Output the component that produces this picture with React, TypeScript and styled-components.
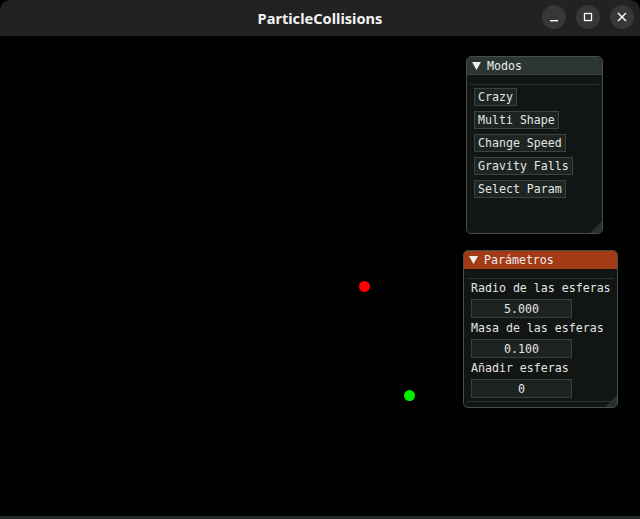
import React from "react";
import styled, { createGlobalStyle } from "styled-components";

const Global = createGlobalStyle`
  html, body { margin: 0; padding: 0; background: #000; }
  #root { width: 640px; height: 519px; }
`;

const Frame = styled.div`
  width: 640px;
  height: 519px;
  display: flex;
  flex-direction: column;
  background: #000;
  overflow: hidden;
  border-radius: 10px 10px 0 0;
`;

const TitleBar = styled.header`
  height: 36px;
  flex: none;
  background: #222222;
  display: flex;
  align-items: center;
  justify-content: center;
  position: relative;
`;

const Title = styled.div`
  font-family: "Noto Sans", "Open Sans", sans-serif;
  font-weight: 700;
  font-size: 14.6px;
  letter-spacing: 0;
  color: #f2f2f2;
`;

const Controls = styled.div`
  position: absolute;
  right: 6px;
  top: 5px;
  display: flex;
  gap: 10px;
`;

const CtlBtn = styled.div`
  width: 24px;
  height: 24px;
  border-radius: 50%;
  background: #373737;
  display: flex;
  align-items: center;
  justify-content: center;
`;

const Canvas = styled.main`
  flex: 1;
  position: relative;
  background: #000;
  border-bottom: 3px solid #23282b;
`;

const Dot = styled.div<{ $c: string }>`
  position: absolute;
  width: 11px;
  height: 11px;
  border-radius: 50%;
  background: ${(p) => p.$c};
`;

const Win = styled.section<{ $w: number; $h: number }>`
  position: absolute;
  width: ${(p) => p.$w}px;
  height: ${(p) => p.$h}px;
  box-sizing: border-box;
  background: #111513;
  border: 1px solid #464d4a;
  border-radius: 5px;
  overflow: hidden;
  display: flex;
  flex-direction: column;
  font-family: "DejaVu Sans Mono", "Liberation Mono", monospace;
  font-size: 11.6px;
  color: #e4e4e4;
`;

const WinTitle = styled.div<{ $active?: boolean }>`
  height: 17px;
  flex: none;
  background: ${(p) => (p.$active ? "#a33a16" : "#2b3531")};
  display: flex;
  align-items: center;
  gap: 6px;
  padding-left: 5px;
  color: #eeeeee;
  border-bottom: 1px solid ${(p) => (p.$active ? "#a33a16" : "#3a4541")};
`;

const Body = styled.div`
  flex: 1;
  display: flex;
  flex-direction: column;
  padding: 9px 3px 0 3px;
  position: relative;
`;

const Sep = styled.div`
  height: 1px;
  background: #2c3431;
  flex: none;
`;

const Spacer = styled.div<{ $h: number }>`
  height: ${(p) => p.$h}px;
  flex: none;
`;

const Items = styled.div<{ $gap: number; $top: number }>`
  display: flex;
  flex-direction: column;
  align-items: flex-start;
  gap: ${(p) => p.$gap}px;
  padding: ${(p) => p.$top}px 4px 0 4px;
`;

const Button = styled.div`
  height: 18px;
  box-sizing: border-box;
  padding: 0 3px;
  border: 1px solid #3a4340;
  background: #1d2421;
  display: flex;
  align-items: center;
  white-space: pre;
`;

const Label = styled.div`
  height: 13px;
  line-height: 13px;
  white-space: pre;
`;

const Input = styled.div`
  width: 101px;
  height: 19px;
  box-sizing: border-box;
  border: 1px solid #3a403e;
  background: #1e2321;
  display: flex;
  align-items: center;
  justify-content: center;
`;

const Grip = styled.div`
  position: absolute;
  right: 0;
  bottom: 0;
  width: 0;
  height: 0;
  border-left: 12px solid transparent;
  border-bottom: 12px solid #2b302e;
`;

const Arrow = () => (
  <svg width="9" height="8" viewBox="0 0 9 8">
    <polygon points="0,0 9,0 4.5,8" fill="#eeeeee" />
  </svg>
);

const App: React.FC = () => {
  const modos = ["Crazy", "Multi Shape", "Change Speed", "Gravity Falls", "Select Param"];
  const params: [string, string][] = [
    ["Radio de las esferas", "5.000"],
    ["Masa de las esferas", "0.100"],
    ["Añadir esferas", "0"],
  ];
  return (
    <>
      <Global />
      <Frame>
        <TitleBar>
          <Title>ParticleCollisions</Title>
          <Controls>
            <CtlBtn>
              <svg width="10" height="10" viewBox="0 0 10 10">
                <rect x="1" y="8" width="8" height="1.4" fill="#fff" />
              </svg>
            </CtlBtn>
            <CtlBtn>
              <svg width="10" height="10" viewBox="0 0 10 10">
                <rect x="1.5" y="1.5" width="7" height="7" fill="none" stroke="#fff" strokeWidth="1.3" />
              </svg>
            </CtlBtn>
            <CtlBtn>
              <svg width="10" height="10" viewBox="0 0 10 10">
                <path d="M1 1 L9 9 M9 1 L1 9" stroke="#fff" strokeWidth="1.4" />
              </svg>
            </CtlBtn>
          </Controls>
        </TitleBar>
        <Canvas>
          <Dot $c="#ff0000" style={{ left: 359, top: 245 }} />
          <Dot $c="#00ee00" style={{ left: 404, top: 354 }} />

          <Win $w={137} $h={178} style={{ left: 466, top: 20 }}>
            <WinTitle>
              <Arrow />
              <span>Modos</span>
            </WinTitle>
            <Body>
              <Sep />
              <Items $gap={5} $top={3}>
                {modos.map((m) => (
                  <Button key={m}>{m}</Button>
                ))}
              </Items>
              <Grip />
            </Body>
          </Win>

          <Win $w={155} $h={158} style={{ left: 463, top: 214 }}>
            <WinTitle $active>
              <Arrow />
              <span>Parámetros</span>
            </WinTitle>
            <Body>
              <Sep />
              <Items $gap={4} $top={3}>
                {params.map(([l, v]) => (
                  <React.Fragment key={l}>
                    <Label>{l}</Label>
                    <Input>{v}</Input>
                  </React.Fragment>
                ))}
              </Items>
              <Spacer $h={3} />
              <Sep />
              <Grip />
            </Body>
          </Win>
        </Canvas>
      </Frame>
    </>
  );
};

export default App;
